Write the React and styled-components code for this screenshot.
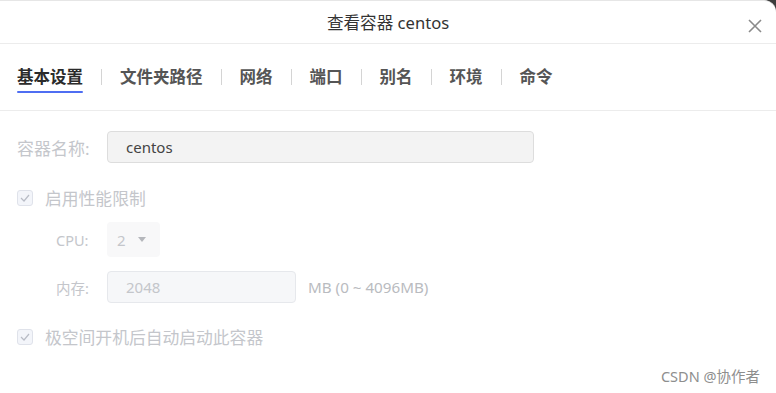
import React from 'react';
import styled, { createGlobalStyle } from 'styled-components';

const GlobalStyle = createGlobalStyle`
  html, body {
    margin: 0;
    padding: 0;
    background: #3c3c3c;
  }
  body {
    font-family: "Noto Sans", "Noto Sans CJK SC", sans-serif;
  }
`;

const Modal = styled.div`
  position: relative;
  width: 776px;
  height: 393px;
  background: #fff;
  border-top: 1px solid #e6e6e6;
  border-top-right-radius: 12px;
  box-sizing: border-box;
  overflow: hidden;
`;

const Header = styled.div`
  height: 42px;
  display: flex;
  align-items: center;
  justify-content: center;
  border-bottom: 1px solid #ececec;
  font-size: 16.6px;
  color: #333;
`;

const Close = styled.button`
  position: absolute;
  top: 15px;
  right: 11px;
  width: 20px;
  height: 20px;
  padding: 0;
  border: none;
  background: none;
  display: flex;
  align-items: center;
  justify-content: center;
`;

const TabBar = styled.div`
  height: 67px;
  display: flex;
  align-items: center;
  padding: 0 17px;
  border-bottom: 1px solid #ececec;
  box-sizing: border-box;
`;

const Tab = styled.div`
  position: relative;
  font-size: 16.5px;
  font-weight: 700;
  color: ${({ active }) => (active ? '#2b2b2b' : '#555')};
  line-height: 24px;

  &::after {
    content: '';
    display: ${({ active }) => (active ? 'block' : 'none')};
    position: absolute;
    left: 0;
    right: 0;
    bottom: -4px;
    height: 2px;
    background: #4f6ef2;
    border-radius: 1px;
  }
`;

const Divider = styled.span`
  width: 1px;
  height: 16px;
  background: #d4d4d4;
  margin: 0 18px;
`;

const Form = styled.div`
  padding: 20px 17px 0;
  display: flex;
  flex-direction: column;
`;

const Row = styled.div`
  display: flex;
  align-items: center;
  margin-bottom: ${({ mb }) => mb || 0}px;
  padding-left: ${({ indent }) => (indent ? 39 : 0)}px;
`;

const Label = styled.span`
  width: ${({ indent }) => (indent ? 51 : 90)}px;
  font-size: ${({ small }) => (small ? 14.5 : 17)}px;
  color: #c4c6cb;
`;

const TextBox = styled.div`
  width: ${({ w }) => w}px;
  height: ${({ h }) => h || 32}px;
  box-sizing: border-box;
  display: flex;
  align-items: center;
  padding-left: ${({ pl }) => pl || 18}px;
  border: 1px solid ${({ soft }) => (soft ? '#e6e8ec' : '#dddddd')};
  border-radius: 4px;
  background: ${({ soft }) => (soft ? '#f6f7f9' : '#f3f3f3')};
  font-size: 15px;
  color: ${({ dim }) => (dim ? '#c4c6cb' : '#444')};
`;

const Select = styled.div`
  width: 53px;
  height: 35px;
  box-sizing: border-box;
  display: flex;
  align-items: center;
  gap: 12px;
  padding-left: 10px;
  border-radius: 4px;
  background: #f8f8f9;
  font-size: 15px;
  color: #c4c6cb;
`;

const Caret = styled.span`
  width: 0;
  height: 0;
  border-left: 4px solid transparent;
  border-right: 4px solid transparent;
  border-top: 5px solid #b5b7bc;
`;

const Unit = styled.span`
  margin-left: 12px;
  font-size: 15.2px;
  color: #b9bbc0;
`;

const Check = styled.span`
  width: 16px;
  height: 16px;
  box-sizing: border-box;
  border: 1px solid #dfe2ea;
  border-radius: 3px;
  background: #f3f5fa;
  display: flex;
  align-items: center;
  justify-content: center;
  margin-right: 12px;
`;

const CheckText = styled.span`
  font-size: 16.8px;
  color: #c4c6cb;
`;

const Watermark = styled.div`
  position: absolute;
  right: 16px;
  bottom: 7px;
  font-size: 14.5px;
  color: #8e8e8e;
`;

const CheckBox = ({ children }) => (
  <Row>
    <Check>
      <svg width="10" height="8" viewBox="0 0 10 8">
        <path d="M1 4l3 3 5-6" fill="none" stroke="#b8bcc6" strokeWidth="1.2" />
      </svg>
    </Check>
    <CheckText>{children}</CheckText>
  </Row>
);

const tabs = ['基本设置', '文件夹路径', '网络', '端口', '别名', '环境', '命令'];

const App = () => (
  <>
    <GlobalStyle />
    <Modal>
      <Header>查看容器 centos</Header>
      <Close aria-label="close">
        <svg width="14" height="14" viewBox="0 0 14 14">
          <path d="M1 1l12 12M13 1L1 13" stroke="#8a8a8a" strokeWidth="1.6" />
        </svg>
      </Close>

      <TabBar>
        {tabs.map((t, i) => (
          <React.Fragment key={t}>
            {i > 0 && <Divider />}
            <Tab active={i === 0}>{t}</Tab>
          </React.Fragment>
        ))}
      </TabBar>

      <Form>
        <Row mb={23}>
          <Label>容器名称:</Label>
          <TextBox w={427}>centos</TextBox>
        </Row>

        <Row mb={12}>
          <CheckBox>启用性能限制</CheckBox>
        </Row>

        <Row indent mb={14}>
          <Label indent small>CPU:</Label>
          <Select>
            2 <Caret />
          </Select>
        </Row>

        <Row indent mb={22}>
          <Label indent small>内存:</Label>
          <TextBox w={189} soft dim>2048</TextBox>
          <Unit>MB (0 ~ 4096MB)</Unit>
        </Row>

        <CheckBox>极空间开机后自动启动此容器</CheckBox>
      </Form>

      <Watermark>CSDN @协作者</Watermark>
    </Modal>
  </>
);

export default App;
